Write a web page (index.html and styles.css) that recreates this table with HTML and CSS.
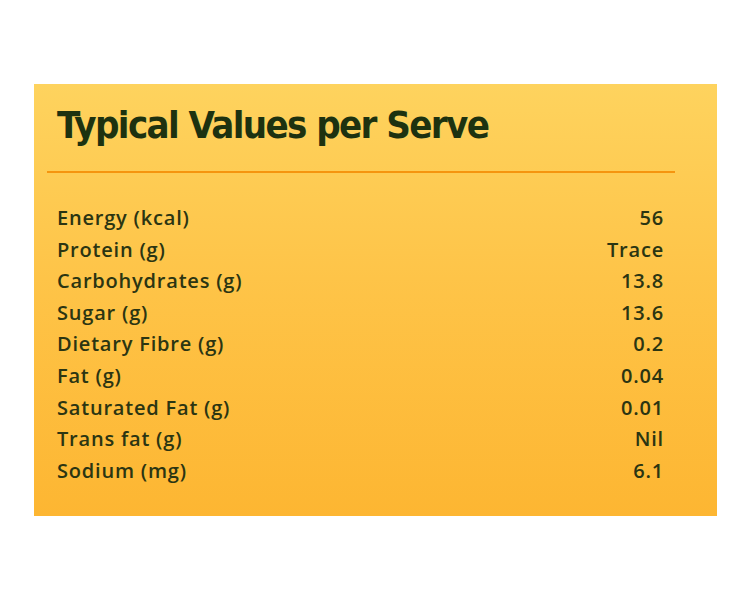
FILE: index.html
```html
<!DOCTYPE html>
<html>
<head>
<meta charset="utf-8">
<link rel="stylesheet" href="styles.css">
</head>
<body>
<div class="card">
  <h1 class="title">Typical Values per Serve</h1>
  <div class="rule"></div>
  <div class="rows">
    <div class="row"><span>Energy (kcal)</span><span>56</span></div>
    <div class="row"><span>Protein (g)</span><span>Trace</span></div>
    <div class="row"><span>Carbohydrates (g)</span><span>13.8</span></div>
    <div class="row"><span>Sugar (g)</span><span>13.6</span></div>
    <div class="row"><span>Dietary Fibre (g)</span><span>0.2</span></div>
    <div class="row"><span>Fat (g)</span><span>0.04</span></div>
    <div class="row"><span>Saturated Fat (g)</span><span>0.01</span></div>
    <div class="row"><span>Trans fat (g)</span><span>Nil</span></div>
    <div class="row"><span>Sodium (mg)</span><span>6.1</span></div>
  </div>
</div>
</body>
</html>
```
FILE: styles.css
```css
html, body {
  margin: 0;
  padding: 0;
  background: #ffffff;
}
body {
  padding-top: 84px;
  padding-left: 34px;
}
.card {
  width: 683px;
  height: 432px;
  box-sizing: border-box;
  background: linear-gradient(180deg, #fed35e 0%, #fec448 45%, #fdb632 100%);
  display: flex;
  flex-direction: column;
}
.title {
  margin: 17px 0 0 23px;
  font-family: "DejaVu Sans Condensed", "DejaVu Sans", sans-serif;
  font-weight: bold;
  font-size: 38px;
  line-height: 48px;
  color: #1d3210;
  letter-spacing: -1.6px;
}
.rule {
  margin: 22px 42px 0 13px;
  height: 2px;
  background: #f5950f;
}
.rows {
  margin: 29px 53px 0 23px;
  display: flex;
  flex-direction: column;
}
.row {
  display: flex;
  justify-content: space-between;
  font-family: "Open Sans", sans-serif;
  font-weight: 600;
  font-size: 20px;
  letter-spacing: 0.8px;
  line-height: 31.6px;
  color: #2b3512;
}
```
